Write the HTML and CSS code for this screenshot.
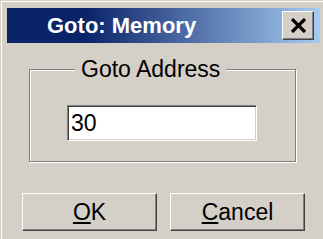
FILE: index.html
```html
<!DOCTYPE html>
<html>
<head>
    <meta charset="UTF-8">
    <link rel="stylesheet" href="styles.css">
</head>
<body>
<div class="window">
    <div class="titlebar">
        <span class="title">Goto: Memory</span>
        <button class="close">
            <svg width="17" height="15" viewBox="0 0 17 15">
                <path d="M2 1 L15 14 M15 1 L2 14" stroke="#000" stroke-width="3.2"/>
            </svg>
        </button>
    </div>
    <div class="client">
        <fieldset class="group">
            <legend>Goto Address</legend>
            <input class="address" type="text" value="30">
        </fieldset>
        <div class="buttons">
            <button class="btn"><u>O</u>K</button>
            <button class="btn"><u>C</u>ancel</button>
        </div>
    </div>
</div>
</body>
</html>
```

FILE: styles.css
```css
* {
    font-family: "Liberation Sans", Arial, sans-serif;
    box-sizing: border-box;
}

body {
    margin: 0;
    padding: 1px 0 0 1px;
    background-color: #d4d0c8;
    height: 239px;
    overflow: hidden;
}

.window {
    border-top: 1px solid #fff;
    border-left: 1px solid #fff;
    padding: 6px 3px 0 5px;
    height: 238px;
}

.titlebar {
    height: 35px;
    display: flex;
    align-items: center;
    justify-content: space-between;
    padding: 0 6px 0 40px;
    background: linear-gradient(to right, #0a246a 0%, #0a246a 25%, #a6caf0 100%);
}

.title {
    color: #fff;
    font-weight: bold;
    font-size: 22px;
}

.close {
    width: 32px;
    height: 29px;
    padding: 0;
    background-color: #d4d0c8;
    border: 1px solid;
    border-color: #fff #404040 #404040 #fff;
    box-shadow: inset -1px -1px #808080;
    display: flex;
    align-items: center;
    justify-content: center;
}

.client {
    padding: 12px 24px 0 22px;
}

.group {
    margin: 0;
    padding: 0;
    border: 1px solid #808080;
    box-shadow: inset 1px 1px #fff, 1px 1px #fff;
}

.group legend {
    margin-left: 45px;
    padding: 0 6px;
    font-size: 23px;
    line-height: 28px;
    color: #000;
    background-color: #d4d0c8;
}

.address {
    display: block;
    margin: 22px 0 20px 37px;
    width: 190px;
    height: 36px;
    padding: 0 0 0 3px;
    font-size: 23px;
    border: 1px solid;
    border-color: #808080 #fff #fff #808080;
    box-shadow: inset 1px 1px #404040, inset -1px -1px #d4d0c8;
    outline: none;
}

.buttons {
    display: flex;
    gap: 13px;
    margin: 31px -17px 0 -7px;
}

.btn {
    flex: 0 0 135px;
    height: 38px;
    font-size: 23px;
    color: #000;
    background-color: #d4d0c8;
    border: 1px solid;
    border-color: #fff #404040 #404040 #fff;
    box-shadow: inset -1px -1px #808080;
    padding: 0;
}
```
